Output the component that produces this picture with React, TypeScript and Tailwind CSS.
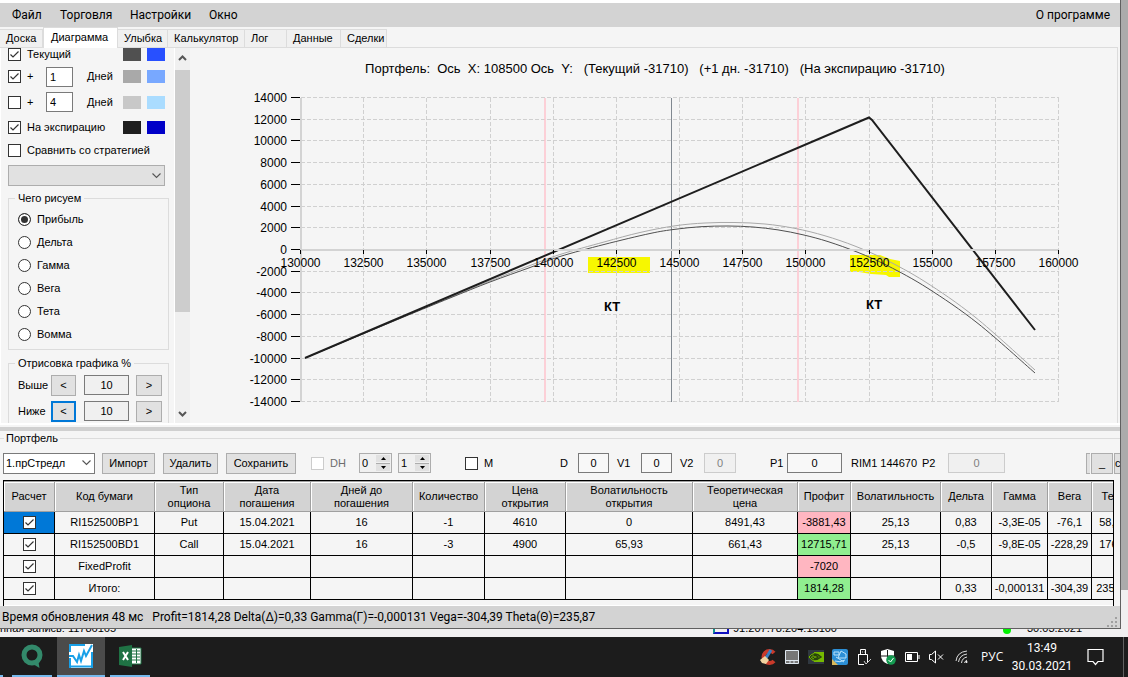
import React from "react";

const tabs = [
  { name: "Доска", width: "w-[43px]" },
  { name: "Диаграмма", width: "w-[75px]" },
  { name: "Улыбка", width: "w-[50px]" },
  { name: "Калькулятор", width: "w-[77px]" },
  { name: "Лог", width: "w-[42px]" },
  { name: "Данные", width: "w-[54px]" },
  { name: "Сделки", width: "w-[46px]" },
];

const columns = [
  { title: "Расчет", width: "w-[51px]" },
  { title: "Код бумаги", width: "w-[100px]" },
  { title: "Тип опциона", width: "w-[69px]" },
  { title: "Дата погашения", width: "w-[87px]" },
  { title: "Дней до погашения", width: "w-[102px]" },
  { title: "Количество", width: "w-[72px]" },
  { title: "Цена открытия", width: "w-[81px]" },
  { title: "Волатильность открытия", width: "w-[127px]" },
  { title: "Теоретическая цена", width: "w-[105px]" },
  { title: "Профит", width: "w-[53px]" },
  { title: "Волатильность", width: "w-[90px]" },
  { title: "Дельта", width: "w-[51px]" },
  { title: "Гамма", width: "w-[56px]" },
  { title: "Вега", width: "w-[44px]" },
  { title: "Тета", width: "w-[43px]" },
];

const rows = [
  ["RI152500BP1", "Put", "15.04.2021", "16", "-1", "4610", "0", "8491,43", "-3881,43", "25,13", "0,83", "-3,3E-05", "-76,1", "58,97"],
  ["RI152500BD1", "Call", "15.04.2021", "16", "-3", "4900", "65,93", "661,43", "12715,71", "25,13", "-0,5", "-9,8E-05", "-228,29", "176,9"],
  ["FixedProfit", "", "", "", "", "", "", "", "-7020", "", "", "", "", ""],
  ["Итого:", "", "", "", "", "", "", "", "1814,28", "", "0,33", "-0,000131", "-304,39", "235,87"],
];

type CheckProps = { id?: string; label?: string; checked?: boolean; disabled?: boolean };

const Check = ({ id, label, checked, disabled }: CheckProps) => (
  <span className="grid h-[13px] w-[13px] shrink-0">
    <input
      type="checkbox"
      id={id}
      aria-label={label}
      defaultChecked={checked}
      disabled={disabled}
      className="peer col-start-1 row-start-1 h-[13px] w-[13px] appearance-none border border-[#333] bg-white disabled:border-[#ccc]"
    />
    <svg
      viewBox="0 0 13 13"
      className="pointer-events-none invisible col-start-1 row-start-1 h-[13px] w-[13px] peer-checked:visible"
    >
      <path d="M2.5 6.5 L5 9 L10.5 3.5" fill="none" stroke="#333" strokeWidth="1.2" />
    </svg>
  </span>
);

const Chevron = () => (
  <svg viewBox="0 0 9 6" className="pointer-events-none h-[6px] w-[9px]">
    <path d="M0.5 0.5 L4.5 4.5 L8.5 0.5" fill="none" stroke="#555" strokeWidth="1.1" />
  </svg>
);

type DaysProps = { id: string; value: string; checked?: boolean; first: string; second: string; height: string };

const DaysRow = ({ id, value, checked, first, second, height }: DaysProps) => (
  <div className={"grid grid-cols-[19px_19px_41px_36px_24px_18px] items-center " + height}>
    <Check id={id} checked={checked} />
    <label htmlFor={id}>+</label>
    <input
      id={id + "-days"}
      defaultValue={value}
      className="h-5 w-[27px] border border-[#7a7a7a] bg-white px-[3px]"
    />
    <label htmlFor={id + "-days"}>Дней</label>
    <span className={"h-[13px] w-[18px] " + first} />
    <span className={"h-[13px] w-[18px] " + second} />
  </div>
);

const RangeRow = ({ title, focused }: { title: string; focused?: boolean }) => (
  <div className="flex h-[26px] items-center">
    <label htmlFor={title} className="w-[33px]">
      {title}
    </label>
    <button
      aria-label={title + " меньше"}
      className={
        focused
          ? "h-[21px] w-[25px] border-2 border-[#0078d7] bg-[#e1e1e1]"
          : "h-[21px] w-[25px] border border-[#adadad] bg-[#e1e1e1]"
      }
    >
      &lt;
    </button>
    <input
      id={title}
      defaultValue="10"
      className="ml-2 h-5 w-[45px] border border-[#7a7a7a] bg-[#f0f0f0] text-center"
    />
    <button aria-label={title + " больше"} className="ml-[7px] h-[21px] w-[26px] border border-[#adadad] bg-[#e1e1e1]">
      &gt;
    </button>
  </div>
);

const Settings = () => (
  <div className="flex w-[190px] shrink-0 border-l border-white">
    <div className="h-[375px] w-[174px] overflow-hidden border-r border-white pl-[7px]">
      <div className="-mt-1 grid h-5 grid-cols-[19px_96px_24px_18px] items-center">
        <Check id="current" checked />
        <label htmlFor="current">Текущий</label>
        <span className="h-[13px] w-[18px] bg-[#505050]" />
        <span className="h-[13px] w-[18px] bg-[#2850ff]" />
      </div>
      <DaysRow id="plus1" value="1" checked first="bg-[#a9a9a9]" second="bg-[#78a8ff]" height="h-[25px]" />
      <DaysRow id="plus4" value="4" first="bg-[#c8c8c8]" second="bg-[#aadcff]" height="h-[26px]" />
      <div className="grid h-6 grid-cols-[19px_96px_24px_18px] items-center">
        <Check id="expiry" checked />
        <label htmlFor="expiry">На экспирацию</label>
        <span className="h-[13px] w-[18px] bg-[#1e1e1e]" />
        <span className="h-[13px] w-[18px] bg-[#0000c8]" />
      </div>
      <div className="flex h-[22px] items-center gap-[6px]">
        <Check id="compare" />
        <label htmlFor="compare">Сравнить со стратегией</label>
      </div>
      <div className="mt-1 grid w-[157px] items-center">
        <select
          aria-label="Стратегия"
          className="col-start-1 row-start-1 h-[21px] appearance-none border border-[#adadad] bg-[#e1e1e1]"
        />
        <span className="pointer-events-none col-start-1 row-start-1 justify-self-end pr-1">
          <Chevron />
        </span>
      </div>

      <fieldset className="mt-[6px] w-[161px] border border-[#dcdcdc] pb-[3px] pl-[9px]">
        <legend className="-ml-[3px] px-[3px] leading-3">Чего рисуем</legend>
        <div className="pt-1">
          {["Прибыль", "Дельта", "Гамма", "Вега", "Тета", "Вомма"].map((item, i) => (
            <label key={item} className="flex h-[23px] items-center gap-[6px]">
              <input
                type="radio"
                name="series"
                defaultChecked={i === 0}
                className="h-[13px] w-[13px] appearance-none rounded-full border border-[#333] bg-white checked:bg-[#333] checked:shadow-[inset_0_0_0_2px_#fff]"
              />
              {item}
            </label>
          ))}
        </div>
      </fieldset>

      <fieldset className="mt-[7px] w-[161px] border border-[#dcdcdc] pl-[9px]">
        <legend className="-ml-[3px] px-[3px] leading-3">Отрисовка графика %</legend>
        <div className="pt-[3px]">
          <RangeRow title="Выше" />
          <RangeRow title="Ниже" focused />
        </div>
      </fieldset>
    </div>
    <div className="flex w-[15px] flex-col items-center bg-[#f0f0f0]">
      <svg viewBox="0 0 15 22" className="h-[22px] w-[15px]">
        <path d="M4 12 L7.5 8.5 L11 12" fill="none" stroke="#555" strokeWidth="2" />
      </svg>
      <div className="h-[242px] w-full bg-[#cdcdcd]" />
      <svg viewBox="0 0 15 18" className="mt-auto h-[18px] w-[15px]">
        <path d="M4 7 L7.5 10.5 L11 7" fill="none" stroke="#555" strokeWidth="2" />
      </svg>
    </div>
  </div>
);

const px = (v: number) => Math.round(109 + ((v - 130000) * 758) / 30000) + 0.5;
const py = (v: number) => Math.round(201 - (v * 152) / 14000) + 0.5;

const xTicks = [...new Array(13)].map((_, i) => 130000 + i * 2500);
const yTicks = [...new Array(15)].map((_, i) => 14000 - i * 2000);

const currentLine = [
  [114, 310], [209, 270.5], [259, 250], [299, 234], [339, 219.5], [369, 208.5], [413, 196.5], [459, 185.5],
  [484, 181.3], [510, 178.7], [537, 178], [562, 179], [587, 181.9], [612, 186.8], [637, 193.6], [667, 204.4],
  [697, 217.9], [737, 240.4], [787, 275.5], [844, 325],
];
const nextDayLine = [
  [114, 310], [209, 270], [259, 249.5], [299, 233], [339, 217.5], [369, 206.5], [413, 194], [449, 184.5],
  [484, 177.8], [514, 175], [544, 174.5], [574, 176], [604, 180.4], [634, 187.8], [664, 198.1], [694, 211.4],
  [734, 233.7], [784, 269], [844, 322],
];

// Catmull-Rom through the sampled points
const smooth = (p: number[][]) => {
  let d = `M${p[0][0]} ${p[0][1]}`;
  for (let i = 0; i < p.length - 1; i++) {
    const a = p[i - 1] || p[i];
    const b = p[i];
    const c = p[i + 1];
    const e = p[i + 2] || c;
    d += ` C${b[0] + (c[0] - a[0]) / 6} ${b[1] + (c[1] - a[1]) / 6} ${c[0] - (e[0] - b[0]) / 6} ${c[1] - (e[1] - b[1]) / 6} ${c[0]} ${c[1]}`;
  }
  return d;
};

const Chart = () => (
  <svg
    viewBox="-1 0 927 375"
    preserveAspectRatio="xMinYMin"
    className="h-[375px] min-w-0 flex-1 font-['Liberation_Sans',sans-serif]"
  >
    <text x="464" y="25" fontSize="13" textAnchor="middle" xmlSpace="preserve" className="whitespace-pre">
      {"Портфель:  Ось  X: 108500 Ось  Y:   (Текущий -31710)   (+1 дн. -31710)   (На экспирацию -31710)"}
    </text>
    <path d="M397 209 H459 V225 H397 Z" fill="#f7f700" />
    <path d="M659 207 H689 L699 211 L709 213 V229 H698 L695 227 L680 226 L668 224 H659 Z" fill="#f7f700" />
    {xTicks.slice(1).map((v) => (
      <line key={v} x1={px(v)} x2={px(v)} y1="50" y2="354" stroke="#d0d0d0" strokeDasharray="4 2" />
    ))}
    {yTicks.map((v) => (
      <line key={v} x1="110" x2="868" y1={py(v)} y2={py(v)} stroke="#d0d0d0" strokeDasharray="4 2" />
    ))}
    <line x1="354" x2="354" y1="50" y2="354" stroke="#ffc0cb" strokeOpacity="0.7" strokeWidth="2" />
    <line x1="607" x2="607" y1="50" y2="354" stroke="#ffc0cb" strokeOpacity="0.7" strokeWidth="2" />
    <line x1="480.5" x2="480.5" y1="50" y2="354" stroke="#808890" />
    <path d={smooth(nextDayLine)} fill="none" stroke="#a9a9a9" />
    <path d={smooth(currentLine)} fill="none" stroke="#505050" />
    <path d="M114 310 L678 69.5 L681 72 L844 282" fill="none" stroke="#1e1e1e" strokeWidth="2" />
    <path d="M110 50 V354" stroke="#d3d3d3" strokeWidth="2" />
    <path d="M110 202 H868" stroke="#d3d3d3" strokeWidth="2" />
    {xTicks.map((v) => (
      <g key={v}>
        <line x1={px(v)} x2={px(v)} y1="202" y2="206" stroke="#000" />
        <text x={px(v)} y="219" fontSize="12" textAnchor="middle">
          {v}
        </text>
      </g>
    ))}
    {yTicks.map((v) => (
      <g key={v}>
        <line x1="100" x2="109" y1={py(v)} y2={py(v)} stroke="#000" />
        <text x="96" y={py(v) + 4} fontSize="12" textAnchor="end">
          {v}
        </text>
      </g>
    ))}
    <text x="421" y="263" fontSize="13" textAnchor="middle" fontWeight="bold">
      КТ
    </text>
    <text x="683" y="261" fontSize="13" textAnchor="middle" fontWeight="bold">
      КТ
    </text>
  </svg>
);

const Spinner = ({ label, value }: { label: string; value: string }) => (
  <div className="flex h-5 w-[33px] border border-[#adadad] bg-[#f0f0f0]">
    <input aria-label={label} defaultValue={value} className="w-[16px] min-w-0 pl-[2px]" />
    <div className="flex flex-1 flex-col gap-px py-px pr-px">
      <button aria-label={label + " +"} className="flex flex-1 items-center justify-center bg-[#e1e1e1]">
        <svg viewBox="0 0 5 3" className="h-[3px] w-[5px]">
          <path d="M0 3 L2.5 0 L5 3 Z" />
        </svg>
      </button>
      <button
        aria-label={label + " -"}
        className="flex flex-1 items-center justify-center border-t border-[#adadad] bg-[#e1e1e1]"
      >
        <svg viewBox="0 0 5 3" className="h-[3px] w-[5px]">
          <path d="M0 0 L2.5 3 L5 0 Z" />
        </svg>
      </button>
    </div>
  </div>
);

const box =
  "h-5 border border-[#7a7a7a] bg-[#f8f8f8] text-center disabled:border-[#ccc] disabled:bg-[#f0f0f0] disabled:text-[#808080]";
const button = "h-[21px] border border-[#adadad] bg-[#e1e1e1]";

const Toolbar = () => (
  <div className="flex h-[35px] items-center overflow-hidden whitespace-nowrap pl-[3px] pt-px">
    <div className="grid w-[92px] items-center">
      <select
        aria-label="Портфель"
        className="col-start-1 row-start-1 h-[21px] appearance-none border border-[#7a7a7a] bg-white pl-[2px]"
      >
        <option>1.прСтредл</option>
      </select>
      <span className="pointer-events-none col-start-1 row-start-1 justify-self-end pr-1">
        <Chevron />
      </span>
    </div>
    <button className={"ml-[7px] w-[53px] " + button}>Импорт</button>
    <button className={"ml-2 w-[55px] " + button}>Удалить</button>
    <button className={"ml-2 w-[70px] " + button}>Сохранить</button>
    <div className="ml-[15px] flex w-12 items-center gap-[6px]">
      <Check id="dh" disabled />
      <label htmlFor="dh" className="text-[#6d6d6d]">
        DH
      </label>
    </div>
    <Spinner label="DH от" value="0" />
    <div className="ml-[6px]">
      <Spinner label="DH до" value="1" />
    </div>
    <div className="ml-[34px] flex w-[95px] items-center gap-[6px]">
      <Check id="m" />
      <label htmlFor="m">M</label>
    </div>
    <label htmlFor="d" className="w-[18px]">D</label>
    <input id="d" defaultValue="0" className={"w-[31px] " + box} />
    <label htmlFor="v1" className="ml-2 w-6">V1</label>
    <input id="v1" defaultValue="0" className={"w-[31px] " + box} />
    <label htmlFor="v2" className="ml-2 w-6">V2</label>
    <input id="v2" defaultValue="0" disabled className={"w-8 " + box} />
    <label htmlFor="p1" className="ml-[34px] w-[17px]">P1</label>
    <input id="p1" defaultValue="0" className={"w-[55px] " + box} />
    <span className="ml-[9px] w-[71px]">RIM1 144670</span>
    <label htmlFor="p2" className="w-[26px]">P2</label>
    <input id="p2" defaultValue="0" disabled className={"w-[57px] " + box} />
    <div className="ml-auto flex w-[34px] shrink-0 overflow-hidden">
      <span className="mr-px h-[21px] w-1 shrink-0 border border-r-0 border-[#adadad] bg-[#e1e1e1]" />
      <button className={"w-[22px] shrink-0 " + button}>_</button>
      <button className={"ml-px w-5 shrink-0 text-left " + button}>с</button>
    </div>
  </div>
);

const profitColor = (value: string) => (value.startsWith("-") ? "bg-[#ffb6c1]" : "bg-[#90ee90]");

const Positions = () => (
  <div className="mx-[3px] mr-[6px] h-[126px] overflow-hidden border border-b-0 border-black">
    <table className="w-[1131px] table-fixed border-separate border-spacing-0 border-t border-[#a0a0a0] text-center">
      <thead>
        <tr className="h-[30px] bg-[#d3d3d3]">
          {columns.map((col, i) => (
            <th
              key={i}
              className={
                "border-b border-r border-b-[#a0a0a0] border-r-[#a0a0a0] p-0 leading-[13px] font-normal shadow-[inset_1px_1px_0_#fff] " +
                col.width
              }
            >
              <span className="block px-1">{col.title}</span>
            </th>
          ))}
        </tr>
      </thead>
      <tbody>
        {rows.map((row, i) => (
          <tr key={row[0]} className="h-[22px]">
            <td className={"border-b border-r border-black p-0 " + (i === 0 ? "bg-[#0078d7]" : "")}>
              <div className="flex justify-center">
                <Check label={"Расчет " + row[0]} checked />
              </div>
            </td>
            {row.map((cell, j) => (
              <td key={j} className={"border-b border-r border-black p-0 " + (j === 8 ? profitColor(cell) : "")}>
                {cell}
              </td>
            ))}
          </tr>
        ))}
      </tbody>
    </table>
    <div className="mt-[5px] h-px bg-white" />
  </div>
);

const Taskbar = () => (
  <footer className="flex h-10 items-stretch overflow-hidden bg-[#1c1c1c] text-[12px] text-white font-['Open_Sans',sans-serif]">
    <span className="w-[3px] self-end border-b-2 border-[#76b9ed]" />
    <button aria-label="QUIK" className="ml-[9px] flex w-10 items-center justify-center border-b-2 border-[#76b9ed]">
      <svg viewBox="0 0 22 24" className="h-6 w-[22px]">
        <circle cx="11" cy="11" r="8" fill="none" stroke="#338a6b" strokeWidth="5" />
        <path d="M11 17 L17 15 L18.500 24 L12 20 Z" fill="#338a6b" />
      </svg>
    </button>
    <button
      aria-label="Опционы"
      className="ml-[5px] flex w-12 items-center justify-center border-b-2 border-[#76b9ed] bg-[#4b4b4b]"
    >
      <svg viewBox="0 0 24 24" className="h-6 w-6">
        <path d="M0 0 H24 V24 H0 Z" fill="#fff" />
        <path d="M0 22.500 H24 M1 24 V14 M1 8 V1 H16 M23 8 V24" fill="none" stroke="#18a0e8" strokeWidth="2" />
        <path d="M0 12 H4 L8 18 L10 11 L12 17 L15 7 L17 12 L23 1" fill="none" stroke="#18a0e8" strokeWidth="2" />
      </svg>
    </button>
    <button aria-label="Excel" className="ml-[5px] flex w-10 items-center justify-center border-b-2 border-[#76b9ed]">
      <svg viewBox="0 0 23 22" className="h-[22px] w-[23px]">
        <path d="M12 3 H22 V19 H12 Z" fill="#fff" stroke="#1f7244" />
        <path d="M13 6 H21 M13 9 H21 M13 12 H21 M13 15 H21 M17.500 4 V18" stroke="#1f7244" />
        <path d="M0 2 L13 0 V22 L0 20 Z" fill="#1f7244" />
        <path d="M4 7 L9 15 M9 7 L4 15" stroke="#fff" strokeWidth="2" />
      </svg>
    </button>
    <div className="ml-auto flex items-center">
      <div className="flex items-center gap-2">
        <svg viewBox="0 0 16 16" className="h-4 w-4">
          <path d="M14 4 A6 6 0 1 0 14 12" fill="none" stroke="#c93a2a" strokeWidth="4" />
          <path d="M11 1 L6 9" stroke="#3a7fc0" strokeWidth="3" />
          <path d="M0 11 L5 7 L9 11 L6 15 L2 14 Z" fill="#f0d3a0" />
        </svg>
        <svg viewBox="0 0 16 16" className="h-4 w-4">
          <path d="M1.500 1.500 H14.500 V14.500 H1.500 Z" fill="#777" stroke="#dfe7ef" />
          <path d="M2 11.500 H14 M6 12 V14 M10 12 V14" stroke="#dfe7ef" />
        </svg>
        <svg viewBox="0 0 16 16" className="h-4 w-4">
          <path d="M0 1 H16 V15 H0 Z" fill="#303840" />
          <path d="M6 3 H16 V13 H6 Z" fill="#76b900" />
          <path d="M1 8 Q7 2 13 8 Q7 13 1 8 Z M4 8 Q7 5 10 8 Q7 11 4 8" fill="none" stroke="#28420c" strokeWidth="1.500" />
          <path d="M6 4.500 Q3 5 1 8 Q3 11 6 12 M6 7 Q4 7 3.500 8 Q4 9.500 6 10" fill="none" stroke="#76b900" />
        </svg>
        <svg viewBox="0 0 16 16" className="h-4 w-4">
          <rect width="16" height="16" rx="2" fill="#2c8fd6" />
          <path d="M2 3 H7 V6 H2 Z M9 2 L14 5 V9 H6 Z M4 8 L12 13 M3 12 Q8 14 13 11" fill="none" stroke="#b9e2fa" />
          <path d="M0 10 L6 16 H0 Z" fill="#d9b95a" />
        </svg>
        <svg viewBox="0 0 16 16" className="h-4 w-4" fill="none" stroke="#fff">
          <path d="M4.500 5 V0.500 H9.500 V5 M2.500 5.500 H11.500 V13 M2.500 5 V15.500 H8 M6 3 H6.800 M8 3 H8.500" />
          <path d="M8 12 L10 15 L15 10" stroke="#ccc" />
        </svg>
        <svg viewBox="0 0 16 16" className="h-4 w-4">
          <path d="M7.500 0 L14 2 V7 Q14 12 7.500 15 Q1 12 1 7 V2 Z" fill="#fff" />
          <path d="M7.500 1 V14 M1 7 H14" stroke="#1c1c1c" />
          <circle cx="11" cy="11" r="4.800" fill="#139a50" />
          <path d="M8.500 11 L10.500 13 L13.500 9" fill="none" stroke="#fff" />
        </svg>
        <svg viewBox="0 0 16 16" className="h-4 w-4">
          <path d="M1.500 3.500 H13.500 V12.500 H1.500 Z M15 6 V10" fill="none" stroke="#fff" />
          <path d="M3 5 H8 V11 H3 Z" fill="#fff" />
        </svg>
        <svg viewBox="0 0 16 16" className="h-4 w-4" fill="none" stroke="#fff">
          <path d="M1.500 5.500 H3.500 L7.500 2 V14 L3.500 10.500 H1.500 Z M10 5.500 L15 10.500 M15 5.500 L10 10.500" />
        </svg>
      </div>
      <svg viewBox="0 0 14 14" className="ml-[11px] h-[14px] w-[14px]" fill="none" stroke="#ddd">
        <path d="M1 11 Q2 2 12 1 M3.500 12 Q4.500 5 12 4 M6.500 13 Q7 8 12 7 M9.500 13 Q10 11 12 10" />
        <circle cx="11.500" cy="12" r="1" fill="#fff" stroke="none" />
      </svg>
      <span className="ml-3 w-[21px]">РУС</span>
      <p className="ml-2 w-16 text-center leading-[18px] font-['Roboto',sans-serif]">
        <span className="block">13:49</span>
        <span className="block">30.03.2021</span>
      </p>
      <svg viewBox="0 0 17 18" className="ml-[13px] h-[18px] w-[17px]">
        <path d="M1 1.500 H16 V13.500 H11 L8.500 16.500 L6 13.500 H1 Z" fill="none" stroke="#fff" strokeWidth="1.200" />
      </svg>
      <span className="ml-[19px] mr-1 h-10 w-px bg-[#606060]" />
    </div>
  </footer>
);

const App = () => {
  return (
    <div className="flex min-h-screen flex-col bg-[#f0eff0] text-[11px] text-black font-['Liberation_Sans',Arial,sans-serif]">
      <div className="flex flex-1">
        <main className="flex min-w-0 flex-1 flex-col border-r border-b border-[#606060] bg-[#f5f5f5]">
          <nav className="flex h-[27px] items-center border-t-3 border-white bg-[#d3d3d3] pl-3 pr-[10px] text-[12px] font-['Roboto',sans-serif]">
            <button className="w-12 text-left">Файл</button>
            <button className="w-[70px] text-left">Торговля</button>
            <button className="w-[79px] text-left">Настройки</button>
            <button className="text-left">Окно</button>
            <button className="ml-auto">О программе</button>
          </nav>

          <div className="flex h-[21px] items-end" role="tablist">
            {tabs.map((tab) =>
              tab.name === "Диаграмма" ? (
                <button
                  key={tab.name}
                  role="tab"
                  aria-selected="true"
                  className={"h-[21px] border-x border-t border-[#dcdcdc] bg-white pl-[7px] pb-[2px] text-left " + tab.width}
                >
                  {tab.name}
                </button>
              ) : (
                <button
                  key={tab.name}
                  role="tab"
                  className={
                    "h-[19px] border-y border-r border-[#dcdcdc] bg-[#f0f0f0] pl-[6px] text-left " + tab.width
                  }
                >
                  {tab.name}
                </button>
              )
            )}
            <div className="mr-[2px] h-px flex-1 bg-[#dcdcdc]" />
          </div>

          <section className="mr-[2px] flex flex-1 border-r border-[#dcdcdc]">
            <Settings />
            <Chart />
          </section>
          <div className="h-2 border-t-2 border-white pt-[2px]">
            <div className="h-1 bg-[#d0d0d0]" />
          </div>

          <section className="h-[175px]">
            <div className="flex h-[14px] items-center gap-[2px]">
              <span className="h-px w-1 bg-[#dcdcdc]" />
              <h2>Портфель</h2>
              <span className="h-px flex-1 bg-[#dcdcdc]" />
            </div>
            <Toolbar />
            <Positions />
          </section>

          <div className="flex h-[22px] items-center justify-between bg-[#d3d3d3] pl-[2px] text-[12px] font-['Roboto',sans-serif]">
            <p className="whitespace-pre">
              {"Время обновления 48 мс   Profit=1814,28 Delta(Δ)=0,33 Gamma(Γ)=-0,000131 Vega=-304,39 Theta(Θ)=235,87"}
            </p>
            <svg viewBox="0 0 12 12" className="mr-[2px] h-3 w-3 self-end" fill="#a0a0a0">
              <path d="M9 1h2v2h-2z M5 5h2v2h-2z M9 5h2v2h-2z M1 9h2v2h-2z M5 9h2v2h-2z M9 9h2v2h-2z" />
            </svg>
          </div>
        </main>
        <aside className="flex w-[7px] flex-col">
          <div className="flex-1 bg-[#ababab]" />
          <div className="h-[39px] border-b border-[#f0eff0]" />
        </aside>
      </div>

      {/* terminal window showing from behind */}
      <div className="flex h-2 items-end overflow-hidden pb-[3px] leading-3">
        <span className="w-[713px]">нная запись: 11786165</span>
        <span className="mr-1 h-3 w-4 border-2 border-[#1010c0] border-l-[#109090]" />
        <span className="flex-1">91.207.78.204:15100</span>
        <span className="mr-4 h-2 w-2 rounded-full bg-[#00f000]" />
        <span className="w-[101px]">30.03.2021</span>
      </div>
      <Taskbar />
    </div>
  );
};

export default App;
